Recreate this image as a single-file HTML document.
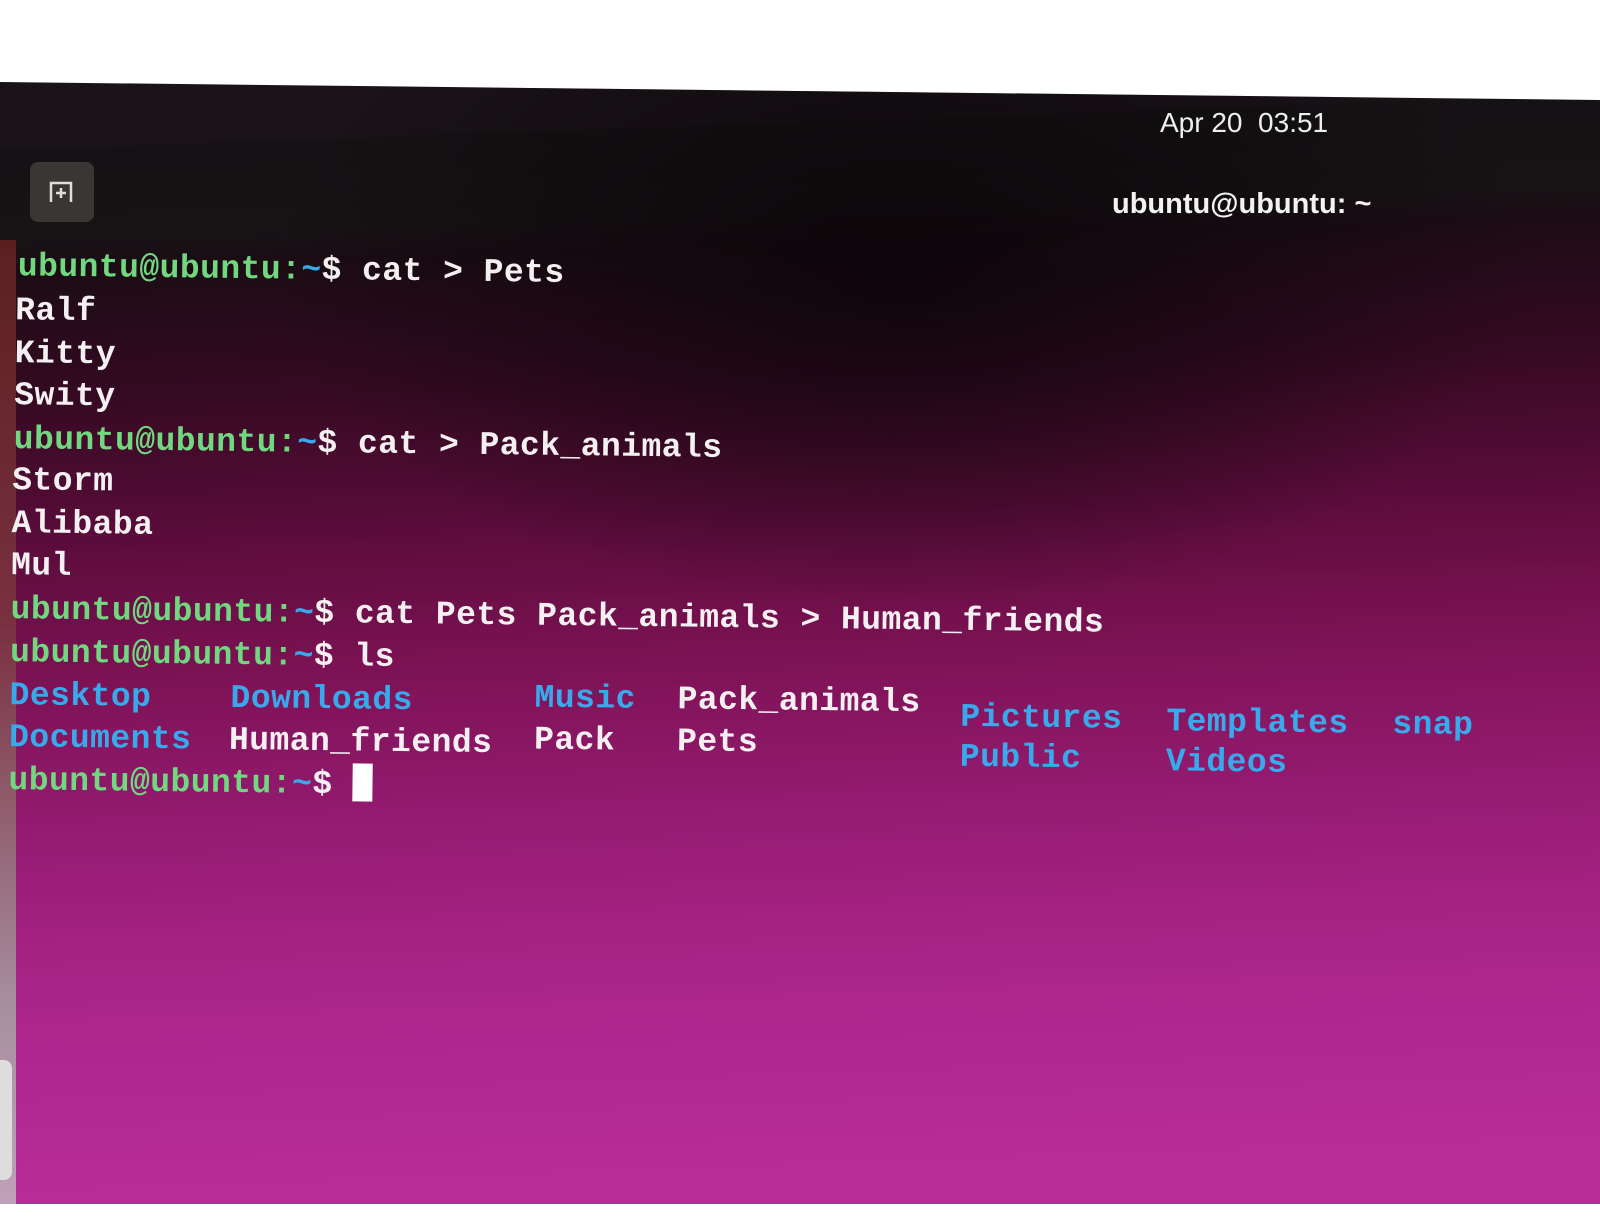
<!DOCTYPE html>
<html><head><meta charset="utf-8"><style>
html,body{margin:0;padding:0}
body{width:1600px;height:1204px;overflow:hidden;position:relative;background:#fff;font-family:"Liberation Mono",monospace}
#screen{position:absolute;left:0;top:0;width:1600px;height:1204px;
clip-path:polygon(0 82px,1600px 100px,1600px 1204px,0 1204px);
background:linear-gradient(178deg,#1a1418 0px,#1a1418 150px,#141214 150px,#161315 240px,#1c0c14 270px,#350a22 400px,#5a0c3a 540px,#7c1254 680px,#961b72 840px,#aa258a 1000px,#b82c98 1204px)}
#rad{position:absolute;left:0;top:0;width:1600px;height:1204px;background:radial-gradient(ellipse 900px 500px at 900px 260px,rgba(10,5,8,.85),rgba(10,5,8,0) 70%)}
#edge{position:absolute;left:0;top:240px;width:16px;height:964px;background:linear-gradient(#5a2020,#7a3040 40%,#a890a0 80%,#c0a0b8)}
.t{position:absolute;font-size:33px;font-weight:bold;white-space:pre;color:#f4f0f2;letter-spacing:0.45px}
.g{color:#72d880}.b{color:#38aaec}.w{color:#f4f0f2}
#lines{position:absolute;left:0;top:0;width:1600px;height:1204px;transform:rotate(0.7deg);transform-origin:0 250px}
</style></head><body>
<div id="screen"><div id="rad"></div></div>
<div id="edge"></div>
<div style="position:absolute;left:0;top:1060px;width:12px;height:120px;background:#ddd;border-radius:0 8px 8px 0"></div>
<div style="position:absolute;left:1160px;top:107px;font-family:'Liberation Sans',sans-serif;font-size:28px;color:#eee">Apr 20&nbsp; 03:51</div>
<div style="position:absolute;left:30px;top:162px;width:64px;height:60px;background:#3a3634;border-radius:8px"></div>
<svg style="position:absolute;left:46px;top:178px" width="32" height="30" viewBox="0 0 32 30"><path d="M5 24V5h20v19" fill="none" stroke="#ddd" stroke-width="2.5"/><path d="M15 10v10M10 15h10" stroke="#ddd" stroke-width="2.5"/></svg>
<div style="position:absolute;left:1112px;top:188px;font-family:'Liberation Sans',sans-serif;font-weight:bold;font-size:29px;color:#f2f2f2">ubuntu@ubuntu: ~</div>
<div id="lines">
<div class="t" style="left:18px;top:248px"><span class="g">ubuntu@ubuntu:</span><span class="b">~</span>$ cat &gt; Pets</div>
<div class="t" style="left:16px;top:292px">Ralf</div>
<div class="t" style="left:16px;top:335px">Kitty</div>
<div class="t" style="left:16px;top:377px">Swity</div>
<div class="t" style="left:16px;top:421px"><span class="g">ubuntu@ubuntu:</span><span class="b">~</span>$ cat &gt; Pack_animals</div>
<div class="t" style="left:15px;top:462px">Storm</div>
<div class="t" style="left:15px;top:505px">Alibaba</div>
<div class="t" style="left:15px;top:547px">Mul</div>
<div class="t" style="left:15px;top:591px"><span class="g">ubuntu@ubuntu:</span><span class="b">~</span>$ cat Pets Pack_animals &gt; Human_friends</div>
<div class="t" style="left:15px;top:634px"><span class="g">ubuntu@ubuntu:</span><span class="b">~</span>$ ls</div>
<div class="t b" style="left:15px;top:677px">Desktop</div>
<div class="t b" style="left:236px;top:677px">Downloads</div>
<div class="t b" style="left:540px;top:673px">Music</div>
<div class="t w" style="left:683px;top:673px">Pack_animals</div>
<div class="t b" style="left:966px;top:687px">Pictures</div>
<div class="t b" style="left:1172px;top:689px">Templates</div>
<div class="t b" style="left:1398px;top:689px">snap</div>
<div class="t b" style="left:15px;top:719px">Documents</div>
<div class="t w" style="left:235px;top:719px">Human_friends</div>
<div class="t w" style="left:540px;top:715px">Pack</div>
<div class="t w" style="left:683px;top:715px">Pets</div>
<div class="t b" style="left:966px;top:727px">Public</div>
<div class="t b" style="left:1172px;top:729px">Videos</div>
<div class="t" style="left:15px;top:759px"><span class="g">ubuntu@ubuntu:</span><span class="b">~</span>$ <span style="display:inline-block;width:20px;height:38px;background:#fff;vertical-align:-8px"></span></div>
</div>
</body></html>
